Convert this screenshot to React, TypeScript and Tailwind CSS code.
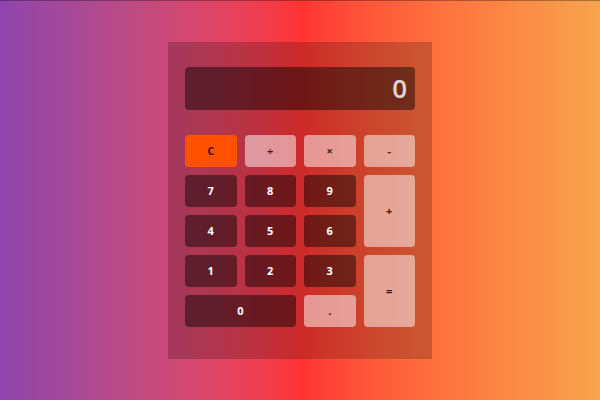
import React from "react";

type Key = {
  label: string;
  kind: "num" | "op" | "clear";
  className?: string;
};

const keys: Key[] = [
  { label: "C", kind: "clear" },
  { label: "÷", kind: "op" },
  { label: "×", kind: "op" },
  { label: "-", kind: "op" },
  { label: "7", kind: "num" },
  { label: "8", kind: "num" },
  { label: "9", kind: "num" },
  { label: "+", kind: "op", className: "row-span-2" },
  { label: "4", kind: "num" },
  { label: "5", kind: "num" },
  { label: "6", kind: "num" },
  { label: "1", kind: "num" },
  { label: "2", kind: "num" },
  { label: "3", kind: "num" },
  { label: "=", kind: "op", className: "row-span-2" },
  { label: "0", kind: "num", className: "col-span-2" },
  { label: ".", kind: "op" },
];

function keyStyle(kind: Key["kind"]) {
  if (kind === "clear") return "bg-[#ff5100] text-[#3a1408]";
  if (kind === "op") return "bg-white/50 text-[#3b1a1c]";
  return "bg-black/45 text-white";
}

export default function App() {
  return (
    <div
      className="w-[600px] h-[400px] flex items-center justify-center bg-gradient-to-r from-[#8e44ad] via-[#ff3333] to-[#f8a34d] border-t border-black/30"
      style={{ fontFamily: '"Open Sans", Inter, sans-serif' }}
    >
      <div className="w-[264px] h-[317px] bg-black/20 pt-[25px] px-[17px]">
        <div className="h-[43px] rounded-sm bg-black/45 flex items-center justify-end pr-[8px] text-[26px] font-semibold text-white/80">
          0
        </div>
        <div className="mt-[25px] grid grid-cols-4 grid-rows-[repeat(5,32px)] gap-x-[8px] gap-y-[8px]">
          {keys.map((k) => (
            <button
              key={k.label}
              className={`rounded-sm flex items-center justify-center text-[11px] font-bold ${keyStyle(k.kind)} ${k.className ?? ""}`}
            >
              {k.label}
            </button>
          ))}
        </div>
      </div>
    </div>
  );
}
